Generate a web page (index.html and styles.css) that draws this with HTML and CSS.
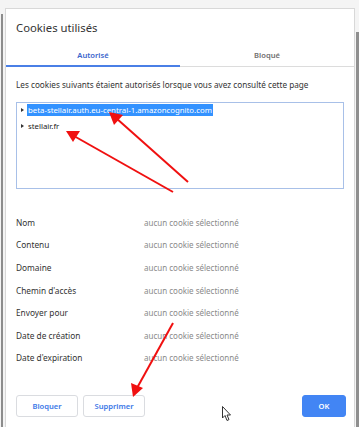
FILE: index.html
```html
<!DOCTYPE html>
<html lang="fr">

<head>
    <meta charset="UTF-8">
    <meta name="viewport" content="width=device-width, initial-scale=1.0">
    <title>Cookies utilisés</title>
    <link rel="stylesheet" href="styles.css">
</head>

<body>
    <div class="screen">
        <div class="edge-left"></div>

        <div class="dialog">
            <h2 class="title">Cookies utilisés</h2>

            <div class="tabs">
                <div class="tab active">Autorisé</div>
                <div class="tab">Bloqué</div>
            </div>

            <div class="content">
                <p class="intro">Les cookies suivants étaient autorisés lorsque vous avez consulté cette page</p>

                <div class="tree">
                    <div class="tree-row">
                        <span class="caret"></span>
                        <span class="host selected">beta-stellair.auth.eu-central-1.amazoncognito.com</span>
                    </div>
                    <div class="tree-row">
                        <span class="caret"></span>
                        <span class="host">stellair.fr</span>
                    </div>
                </div>

                <div class="details">
                    <div class="detail"><span class="label">Nom</span><span class="value">aucun cookie sélectionné</span></div>
                    <div class="detail"><span class="label">Contenu</span><span class="value">aucun cookie sélectionné</span></div>
                    <div class="detail"><span class="label">Domaine</span><span class="value">aucun cookie sélectionné</span></div>
                    <div class="detail"><span class="label">Chemin d'accès</span><span class="value">aucun cookie sélectionné</span></div>
                    <div class="detail"><span class="label">Envoyer pour</span><span class="value">aucun cookie sélectionné</span></div>
                    <div class="detail"><span class="label">Date de création</span><span class="value">aucun cookie sélectionné</span></div>
                    <div class="detail"><span class="label">Date d'expiration</span><span class="value">aucun cookie sélectionné</span></div>
                </div>
            </div>

            <div class="footer">
                <button class="btn">Bloquer</button>
                <button class="btn">Supprimer</button>
                <span class="spacer"></span>
                <button class="btn primary">OK</button>
            </div>
        </div>

        <div class="edge-right"></div>
    </div>

    <!-- annotations drawn over the screenshot -->
    <svg class="arrows" width="359" height="427" viewBox="0 0 359 427">
        <g stroke="#f01010" stroke-width="2" fill="none">
            <line x1="188" y1="182" x2="116" y2="118" />
            <line x1="173" y1="192" x2="74" y2="136" />
            <line x1="173" y1="323" x2="137" y2="388" />
        </g>
        <g fill="#f01010">
            <polygon points="109,112 123,115 114,125" />
            <polygon points="66,131 80,131 73,142" />
            <polygon points="133,397 131,383 143,388" />
        </g>
    </svg>

    <svg class="cursor" width="10" height="16" viewBox="0 0 10 16">
        <path d="M0.5 0.5 L0.5 12 L3 9.5 L5 14.5 L7 13.6 L5 9 L8.5 9 Z" fill="#fff" stroke="#333" stroke-width="1" />
    </svg>
</body>

</html>
```

FILE: styles.css
```css
body {
    font-family: "Noto Sans", "Open Sans", sans-serif;
    background-color: #f4f4f4;
    margin: 0;
    width: 359px;
    height: 427px;
    overflow: hidden;
    position: relative;
}

.screen {
    display: flex;
    height: 100%;
}

.edge-left {
    width: 2px;
    margin: 14px 2px 0 1px;
    background-color: #8c8c8c;
}

.edge-right {
    flex: 1;
    margin-top: 32px;
    margin-left: 1px;
    background-color: #8f8f8f;
}

.dialog {
    width: 348px;
    margin-top: 8px;
    background-color: #ffffff;
    border: 1px solid #d8d8d8;
    border-bottom: none;
    display: flex;
    flex-direction: column;
}

.title {
    margin: 0;
    padding: 0 10px;
    height: 37px;
    line-height: 38px;
    font-size: 11.3px;
    font-weight: normal;
    color: #333333;
}

.tabs {
    display: flex;
    border-bottom: 1px solid #dcdcdc;
}

.tab {
    flex: 1;
    text-align: center;
    font-size: 7.6px;
    font-weight: 600;
    color: #6f6f6f;
    line-height: 18px;
    padding-bottom: 2px;
}

.tab.active {
    color: #3a66cc;
    padding-bottom: 0;
    border-bottom: 2px solid #4a7fe6;
    margin-bottom: -1px;
}

.content {
    padding: 0 10px;
    flex: 1;
}

.intro {
    margin: 12px 0 0;
    font-size: 8.2px;
    color: #333333;
    line-height: 12px;
}

.tree {
    margin-top: 11px;
    height: 87px;
    box-sizing: border-box;
    border: 1px solid #a8c0e8;
    padding: 1px 4px;
}

.tree-row {
    display: flex;
    align-items: center;
    height: 12px;
    margin-bottom: 4px;
    font-size: 7.8px;
    color: #222222;
}

.caret {
    width: 0;
    height: 0;
    border-top: 2.5px solid transparent;
    border-bottom: 2.5px solid transparent;
    border-left: 3px solid #333333;
    margin-right: 3px;
}

.host {
    padding: 0 1px;
    line-height: 12px;
}

.host.selected {
    background-color: #3392ff;
    color: #ffffff;
}

.details {
    margin-top: 22px;
}

.detail {
    display: flex;
    height: 22.6px;
    font-size: 8.3px;
    align-items: center;
}

.label {
    width: 128px;
    color: #333333;
}

.value {
    color: #8a8a8a;
    font-size: 8px;
}

.footer {
    display: flex;
    gap: 5px;
    padding: 0 8px 10px 10px;
}

.spacer {
    flex: 1;
}

.btn {
    font-family: inherit;
    font-size: 7.6px;
    font-weight: 600;
    color: #3b78e7;
    background-color: #ffffff;
    border: 1px solid #dadce0;
    border-radius: 3px;
    height: 22px;
    width: 62px;
    padding: 0;
}

.btn.primary {
    background-color: #4285f4;
    border-color: #4285f4;
    color: #ffffff;
    width: 44px;
}

.arrows {
    position: absolute;
    top: 0;
    left: 0;
    pointer-events: none;
}

.cursor {
    position: absolute;
    left: 222px;
    top: 406px;
}
```
